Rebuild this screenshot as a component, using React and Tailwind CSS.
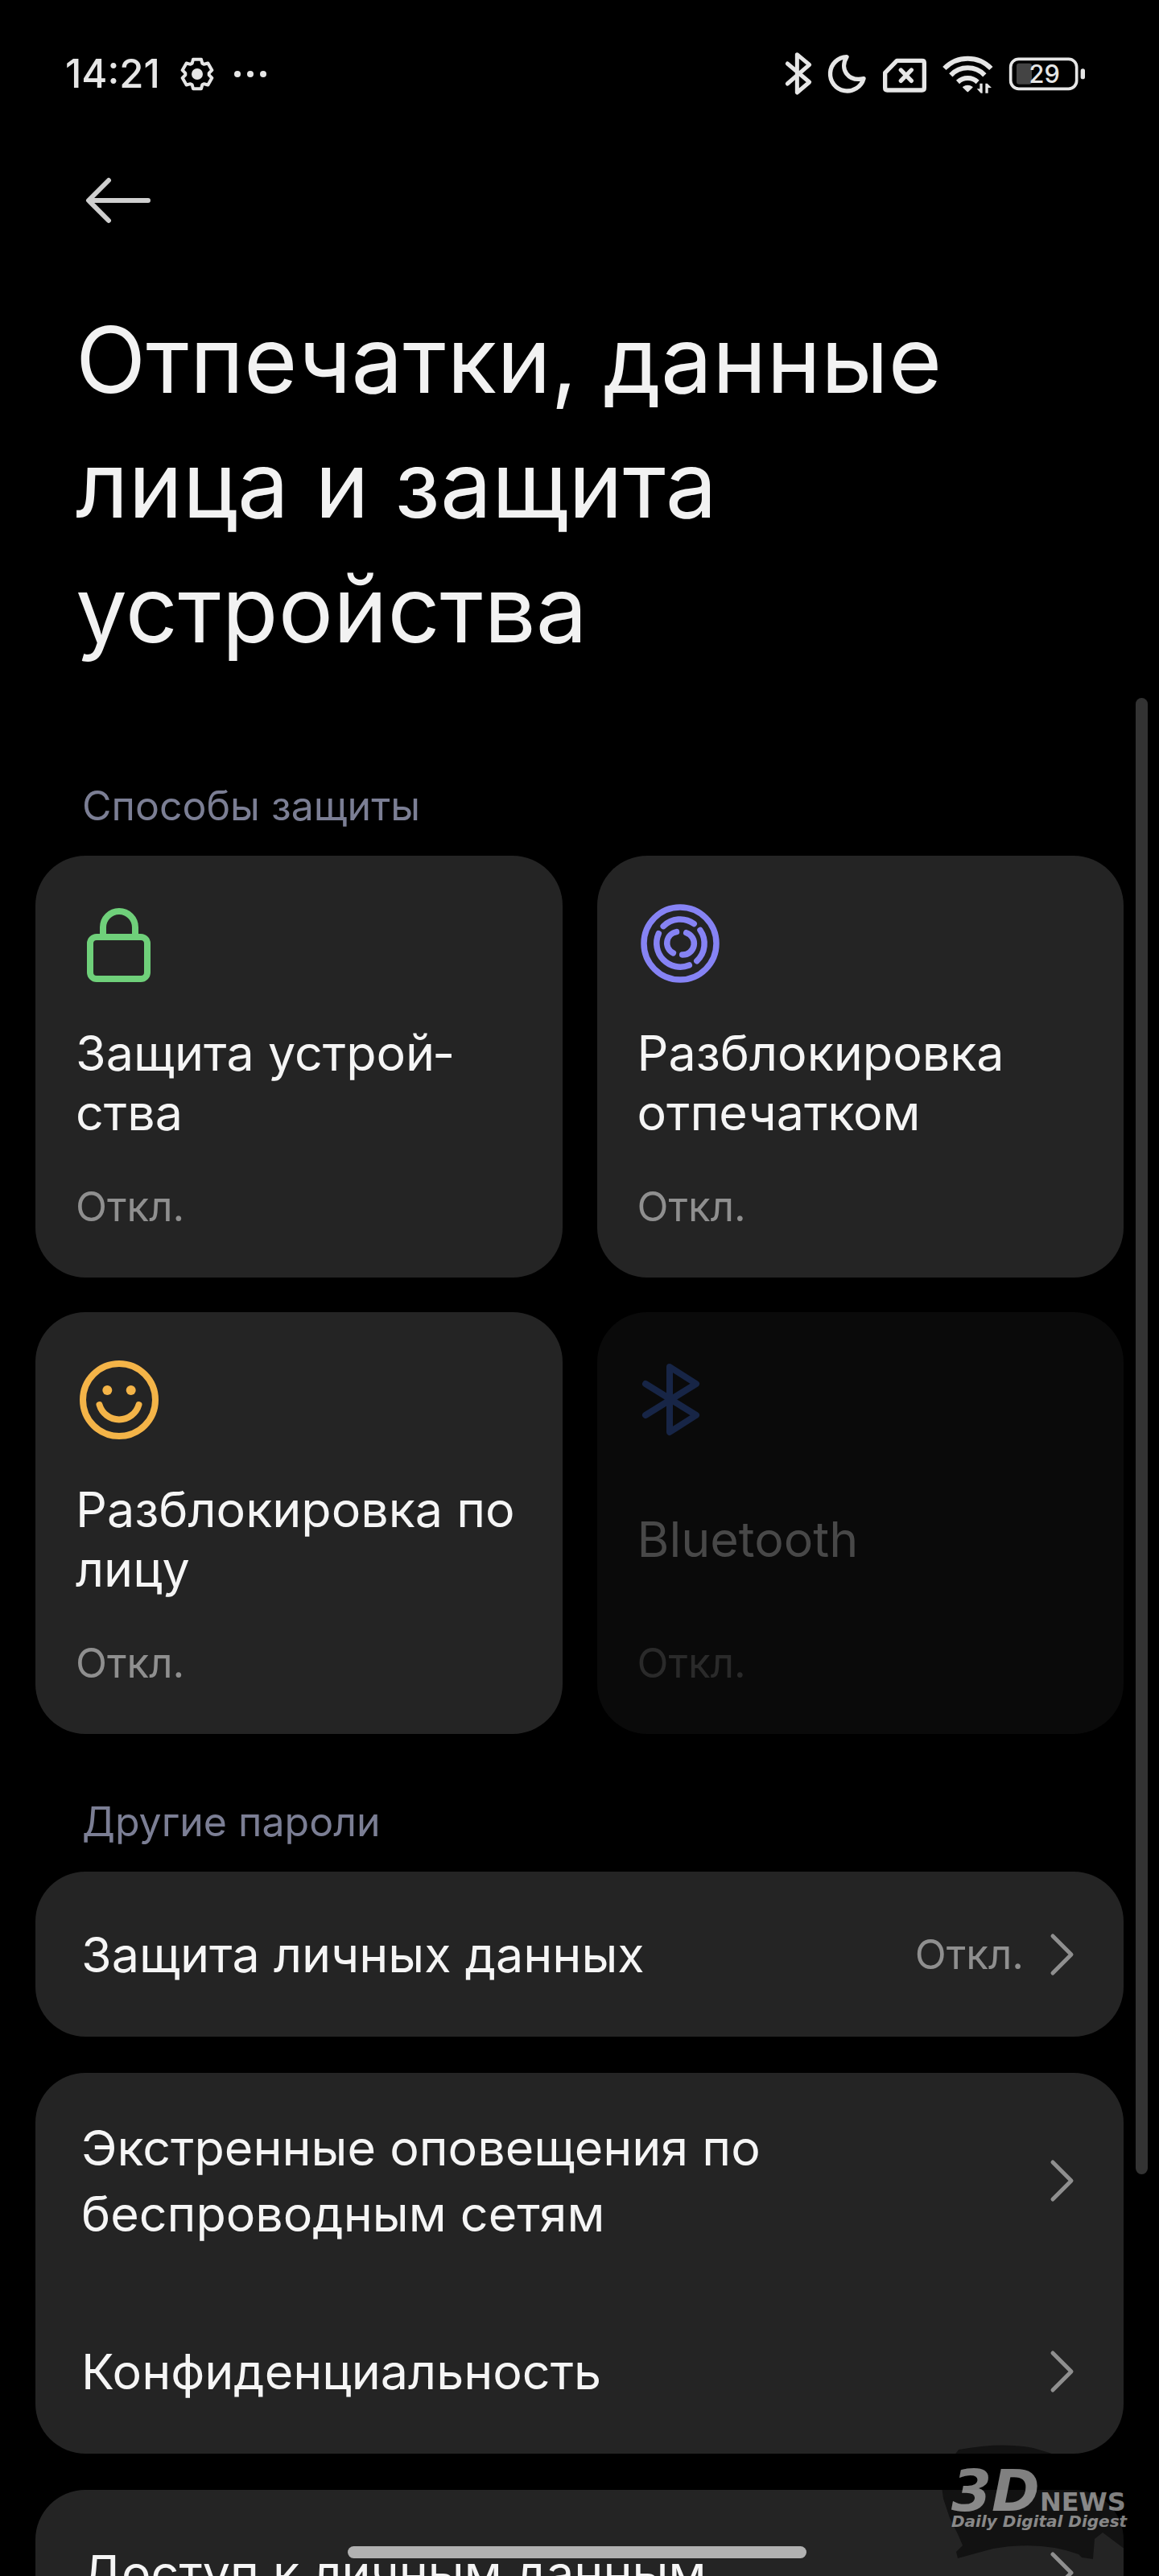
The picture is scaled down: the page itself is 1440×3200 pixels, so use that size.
const methods = [
  { id: 'lock', title: 'Защита устрой\u00ADства', status: 'Откл.', Icon: LockIcon },
  { id: 'finger', title: 'Разблокировка отпечатком', status: 'Откл.', Icon: FingerprintIcon },
  { id: 'face', title: 'Разблокировка по лицу', status: 'Откл.', Icon: FaceIcon },
  { id: 'bluetooth', title: 'Bluetooth', status: 'Откл.', Icon: BluetoothIcon, disabled: true },
];

const groups = [
  [{ title: 'Защита личных данных', value: 'Откл.' }],
  [{ title: 'Экстренные оповещения по беспроводным сетям' }, { title: 'Конфиденциальность' }],
  [{ title: 'Доступ к личным данным' }],
];

function LockIcon() {
  return (
    <svg viewBox="2 0 112 112" className="size-28 text-[#6fd07a]" fill="none" stroke="currentColor" strokeWidth="8">
      <rect x="20" y="48" width="71" height="52" rx="8" />
      <path d="M36 48V36a20 20 0 0 1 40 0v12" />
    </svg>
  );
}

function FingerprintIcon() {
  return (
    <svg viewBox="2 0 112 112" className="size-28 text-[#8683f4]" fill="none" stroke="currentColor" strokeWidth="7.5" strokeLinecap="round">
      <circle cx="55" cy="56" r="45" />
      <path d="M34.2 34.6A29.5 29.5 0 0 1 72.2 31.5" />
      <path d="M80 39.5A29.5 29.5 0 0 1 75.8 77.7" />
      <path d="M66.3 83A29.5 29.5 0 0 1 28.3 43.7" />
      <path d="M50.5 41.6A14 14 0 0 0 46.4 67.9" />
      <path d="M62.7 42.7A14 14 0 0 1 57.7 70" />
    </svg>
  );
}

function FaceIcon() {
  return (
    <svg viewBox="2 0 112 112" className="size-28 text-[#f4b448]" fill="none" stroke="currentColor" strokeWidth="8" strokeLinecap="round">
      <circle cx="56" cy="56" r="45" />
      <path d="M31.5 62a25.5 25.5 0 0 0 49 0" />
      <circle cx="41.3" cy="44" r="6" fill="currentColor" stroke="none" />
      <circle cx="70.7" cy="44" r="6" fill="currentColor" stroke="none" />
    </svg>
  );
}

function BluetoothIcon() {
  return (
    <svg viewBox="2 0 112 112" className="size-28 text-[#172546]" fill="none" stroke="currentColor" strokeWidth="8" strokeLinecap="round" strokeLinejoin="round">
      <path d="M12 36L75 75L42 96V15L75 36L12 75" />
    </svg>
  );
}

function GearIcon() {
  const tooth = [[-19, -40], [-15, -55], [15, -55], [19, -40]];
  const points = [0, 60, 120, 180, 240, 300].flatMap((deg) => {
    const a = (deg * Math.PI) / 180;
    return tooth.map(([x, y]) =>
      `${(x * Math.cos(a) - y * Math.sin(a)).toFixed(1)},${(x * Math.sin(a) + y * Math.cos(a)).toFixed(1)}`
    );
  });
  return (
    <svg viewBox="-66 -66 132 132" className="size-11" fill="none" stroke="currentColor" strokeWidth="12" strokeLinejoin="round">
      <polygon points={points.join(' ')} />
      <circle r="21" fill="currentColor" stroke="none" />
    </svg>
  );
}

function StatusBar() {
  return (
    <div className="flex items-center justify-between pl-[81px] pr-[91px] text-[#e6e6e6]">
      <div className="flex items-center gap-6">
        <span className="text-[49px] leading-[60px] font-medium">14:21</span>
        <GearIcon />
        <div className="flex gap-2">
          <span className="size-2 rounded-full bg-[#e6e6e6]" />
          <span className="size-2 rounded-full bg-[#e6e6e6]" />
          <span className="size-2 rounded-full bg-[#e6e6e6]" />
        </div>
      </div>
      <div className="flex items-center gap-[18px]">
        <svg viewBox="72 67 108 180" className="h-[60px] w-9" fill="none" stroke="currentColor" strokeWidth="15" strokeLinecap="round" strokeLinejoin="round">
          <path d="M85 118L167 187L121 226V84L167 122L85 193" />
        </svg>
        <svg viewBox="234 67 150 180" className="h-[60px] w-[50px]" fill="none" stroke="currentColor" strokeWidth="16" strokeLinejoin="round">
          <path d="M306 93A63.5 63.5 0 1 0 369 174C312 186 278 140 306 93Z" />
        </svg>
        <svg viewBox="438 67 168 180" className="h-[60px] w-14" fill="none" stroke="currentColor" strokeWidth="16" strokeLinecap="round" strokeLinejoin="round">
          <path d="M493 107H587Q595 107 595 115V209Q595 217 587 217H457Q449 217 449 209V152Z" />
          <path d="M508 142L547 182M547 142L508 182" />
        </svg>
        <svg viewBox="660 67 195 180" className="h-[60px] w-[65px]" fill="none" stroke="currentColor" strokeWidth="18">
          <path d="M670 136A121 121 0 0 1 844 136" />
          <path d="M694 161A87 87 0 0 1 820 161" />
          <path d="M720 187A54 54 0 0 1 794 187" />
          <path d="M740 206Q757 194 774 206L757 222Z" fill="currentColor" strokeWidth="4" strokeLinejoin="round" />
          <path d="M802 192h10v36h-6l-15 -16h11ZM823 228h10v-20h13l-16 -16h-7Z" fill="currentColor" stroke="none" />
        </svg>
        <svg viewBox="909 67 288 180" className="h-[60px] w-24">
          <rect x="917" y="101" width="246" height="111" rx="30" fill="none" stroke="currentColor" strokeWidth="11" />
          <rect x="939" y="117" width="57" height="78" rx="9" fill="#444444" />
          <rect x="1178" y="137" width="16" height="39" rx="8" fill="currentColor" />
          <text x="1043" y="191" textAnchor="middle" fontSize="92" fontWeight="500" fill="currentColor">29</text>
        </svg>
      </div>
    </div>
  );
}

function MethodCard({ title, status, Icon, disabled }) {
  return (
    <button
      type="button"
      disabled={disabled}
      className={`flex flex-col items-start rounded-[62px] px-[50px] pt-[53px] pb-[58px] text-left ${
        disabled ? 'bg-[#0a0a0a] text-[#484848]' : 'bg-[#242424] text-[#f5f5f5]'
      }`}
    >
      <Icon />
      <span className="mt-[43px] flex min-h-[148px] items-center text-[61px] leading-[74px]">{title}</span>
      <span className={`mt-[50px] text-[51px] leading-[60px] ${disabled ? 'text-[#2a2a2a]' : 'text-[#8f8f8f]'}`}>
        {status}
      </span>
    </button>
  );
}

function ListItem({ title, value }) {
  return (
    <a href="#" className="flex min-h-[205px] items-center justify-between py-[52px] pr-[60px] pl-[57px]">
      <span className="max-w-[900px] text-[61px] leading-[82px] text-[#f5f5f5]">{title}</span>
      <span className="flex items-center gap-8 text-[#8f8f8f]">
        {value && <span className="text-[51px] leading-[60px]">{value}</span>}
        <svg viewBox="0 0 32 60" className="h-[60px] w-8" fill="none" stroke="currentColor" strokeWidth="5" strokeLinecap="round" strokeLinejoin="round">
          <path d="M4 7L27 30L4 53" />
        </svg>
      </span>
    </a>
  );
}

function Watermark() {
  return (
    <div className="absolute right-[40px] bottom-[10px] h-[156px] w-[236px]">
      <svg viewBox="0 0 236 156" className="absolute inset-0 size-full" fill="black" fillOpacity="0.5">
        <path d="M27 9Q80 -1 120 7L140 13L200 40L236 70V134L230 130L206 112L196 120L194 145L180 143L176 139Q130 122 70 132L26 144L24 136L32 128L26 114L16 94L8 70L4 40Z" />
      </svg>
      <div className="relative pt-[30px] pl-[18px] font-['DejaVu_Sans',sans-serif] font-bold text-white/50">
        <div className="flex items-baseline">
          <span className="text-[72px] leading-[60px] italic">3D</span>
          <span className="text-[32px] leading-6">NEWS</span>
        </div>
        <p className="text-[20px] leading-4 whitespace-nowrap italic">Daily Digital Digest</p>
      </div>
    </div>
  );
}

function App() {
  return (
    <div className="relative h-screen overflow-hidden bg-black pt-[62px] font-['Inter',sans-serif]">
      <StatusBar />
      <button type="button" aria-label="Назад" className="mt-24 ml-[105px] block text-[#cfcfcf]">
        <svg viewBox="0 0 84 60" className="h-[60px] w-[84px]" fill="none" stroke="currentColor" strokeWidth="6" strokeLinecap="round" strokeLinejoin="round">
          <path d="M79 31H6M30 6L5 31L30 56" />
        </svg>
      </button>
      <h1 className="mt-[91px] px-[94px] text-[114px] leading-[155px] text-[#f2f2f2]">
        Отпечатки, данные лица и защита устройства
      </h1>

      <main className="px-11">
        <h2 className="mt-[137px] mb-8 px-[58px] text-[50px] leading-[60px] text-[#7b7e94]">Способы защиты</h2>
        <div className="grid grid-cols-2 gap-[43px]">
          {methods.map((m) => (
            <MethodCard key={m.id} {...m} />
          ))}
        </div>

        <h2 className="mt-[79px] mb-8 px-[58px] text-[50px] leading-[60px] text-[#7b7e94]">Другие пароли</h2>
        <div className="flex flex-col gap-[45px]">
          {groups.map((items) => (
            <div key={items[0].title} className="rounded-[62px] bg-[#242424]">
              {items.map((item) => (
                <ListItem key={item.title} {...item} />
              ))}
            </div>
          ))}
        </div>
      </main>

      {/* scrollbar */}
      <div className="absolute top-[867px] right-[14px] h-[1834px] w-[15px] rounded-full bg-[#333333]" />
      <Watermark />
      {/* gesture bar */}
      <div className="absolute bottom-[22px] left-[30%] h-[15px] w-[570px] rounded-full bg-[#b1b1b1]" />
    </div>
  );
}

export default App;
